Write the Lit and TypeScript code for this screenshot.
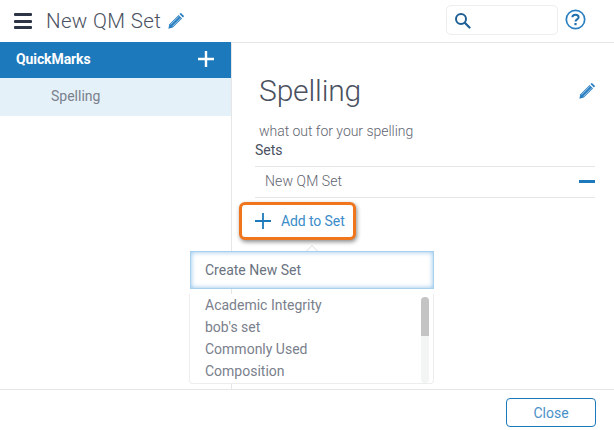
import { LitElement, html, css, svg } from "lit";
import { customElement } from "lit/decorators.js";

const pencil = (size: number) => html`<svg class="pencil" width=${size} height=${size} viewBox="0 0 16 16">
  ${svg`<path fill="#2a7fc1" d="M0.3 15.7 L1.4 11.2 L10.6 2 L14 5.4 L4.8 14.6 Z"/>
  <path fill="#2a7fc1" d="M11.5 1.1 L12.4 0.2 Q12.8 -0.1 13.2 0.2 L15.8 2.8 Q16.1 3.2 15.8 3.6 L14.9 4.5 Z"/>
  <path fill="none" stroke="#cfe3f3" stroke-width="0.7" d="M2.6 11.6 L10.8 3.4 M4.4 13.4 L12.6 5.2"/>`}
</svg>`;

@customElement("app-root")
export class AppRoot extends LitElement {
  static styles = css`
    :host {
      display: block;
      width: 614px;
      height: 430px;
      font-family: Roboto, "Liberation Sans", sans-serif;
      color: #5f6570;
      background: #fff;
      overflow: hidden;
    }
    .page { position: relative; display: flex; flex-direction: column; height: 430px; }
    .top {
      height: 42px; flex: none; display: flex; align-items: center;
      padding: 0 28px 0 14px;
    }
    .burger { width: 18px; height: 16px; display: flex; flex-direction: column; justify-content: space-between; margin-right: 14px; }
    .burger i { display: block; height: 3px; background: #2c3446; border-radius: 1px; }
    .title { font-size: 20.5px; font-weight: 300; color: #4a5160; letter-spacing: 0.35px; }
    .top .pencil { margin: 0 0 0 7px; }
    .search {
      margin-left: auto; width: 112px; height: 30px; box-sizing: border-box;
      border: 1px solid #eceded; border-radius: 5px; display: flex; align-items: center;
      padding-left: 7px; margin-top: -2px;
    }
    .help { margin-left: 7px; margin-top: -4px; display: block; }
    .main { flex: 1; display: flex; min-height: 0; border-top: 1px solid #e6e6e6; }
    .side { width: 231px; flex: none; border-right: 1px solid #e6e6e6; margin-top: -1px; }
    .side-head {
      height: 36px; background: #1c79bb; color: #fff; display: flex; align-items: center;
      justify-content: space-between; padding: 0 16px 2px; box-sizing: border-box; font-size: 14px; font-weight: 700; letter-spacing: -0.1px;
    }
    .side-item {
      height: 38px; background: #e5f1f9; display: flex; align-items: center; padding: 0 0 2px 51px; box-sizing: border-box;
      font-size: 14px; color: #7a808c;
    }
    .content { flex: 1; padding: 0 19px 0 23px; min-width: 0; position: relative; }
    .head-row { display: flex; align-items: center; justify-content: space-between; margin: 30px 0 0 4px; height: 36px; }
    h1 { margin: 0; font-size: 30px; font-weight: 300; color: #4a5160; letter-spacing: -0.15px; line-height: 36px; }
    .desc { margin: 14px 0 0 4px; font-size: 14px; line-height: 16px; color: #5f6570; font-weight: 300; letter-spacing: -0.03px; }
    .sets-label { font-size: 14px; line-height: 16px; margin-top: 3px; color: #4a5060; }
    .set-row {
      margin-top: 8px; height: 32px; box-sizing: border-box; border-top: 1px solid #e6e6e6; border-bottom: 1px solid #e6e6e6;
      display: flex; align-items: center; justify-content: space-between; padding: 0 0 2px 10px;
      font-size: 14px; font-weight: 300; color: #5f6570; letter-spacing: 0.1px;
    }
    .minus { width: 16px; height: 3px; background: #1c79bb; }
    .footer {
      height: 41px; box-sizing: border-box; flex: none; border-top: 1px solid #e6e6e6; display: flex; justify-content: flex-end;
      align-items: flex-start; padding: 8px 18px 0 0;
    }
    .close {
      width: 90px; height: 29px; box-sizing: border-box; border: 1.5px solid #1c79bb; border-radius: 4px;
      background: #fff; color: #4a90c8; font: 400 14px Roboto, sans-serif; padding: 0;
    }
    .callout {
      position: absolute; left: 239px; top: 202px; width: 117px; height: 38px; box-sizing: border-box;
      border: 3px solid #f0761e; border-radius: 6px; background: #fff;
      box-shadow: 1px 2px 4px rgba(0,0,0,.45); display: flex; align-items: center; padding-left: 13px;
      color: #3b8cc8; font-size: 14px; letter-spacing: -0.1px; gap: 10px;
    }
    .arrow {
      position: absolute; left: 307px; top: 247px; width: 9px; height: 9px; background: #fff;
      border-left: 1px solid #e6e6e6; border-top: 1px solid #e6e6e6; transform: rotate(45deg);
    }
    .pop { position: absolute; left: 190px; top: 251px; width: 244px; }
    .new {
      height: 38px; box-sizing: border-box; border: 1px solid #a9d0ec; background: #fff;
      box-shadow: inset 0 0 5px rgba(100,170,225,.75); display: flex; align-items: center; padding-left: 14px;
      font-size: 14px; color: #6b7280; letter-spacing: 0;
    }
    .list {
      height: 90px; margin-top: 5px; margin-left: -1px; box-sizing: border-box; border: 1px solid #ededed; border-top: none;
      border-radius: 0 0 4px 4px; background: #fff; padding: 0 0 0 15px; position: relative; overflow: hidden;
      font-size: 14px; color: #7a808c; letter-spacing: 0;
    }
    .list div.it { height: 22px; line-height: 22px; }
    .track { position: absolute; right: 4px; top: 3px; bottom: 0; width: 8px; background: #f3f5f5; border-radius: 4px; }
    .thumb { width: 8px; height: 39px; background: #c4c4c4; border-radius: 4px 4px 0 0; }
  `;

  render() {
    return html`<div class="page">
      <div class="top">
        <div class="burger"><i></i><i></i><i></i></div>
        <div class="title">New QM Set</div>
        ${pencil(16)}
        <div class="search">
          <svg width="17" height="17" viewBox="0 0 17 17">
            ${svg`<circle cx="7" cy="7" r="5" fill="none" stroke="#1f5f94" stroke-width="2"/>
            <path d="M10.8 10.8 L15.5 15.5" stroke="#1f5f94" stroke-width="2.2" stroke-linecap="round"/>`}
          </svg>
        </div>
        <svg class="help" width="21" height="21" viewBox="0 0 21 21">
          ${svg`<circle cx="10.5" cy="10.5" r="9.2" fill="none" stroke="#2a7fc1" stroke-width="1.7"/>
          <path d="M7.4 8.2 C7.4 4.8 13.6 4.8 13.6 8.2 C13.6 10.4 10.5 10.4 10.5 12.6" fill="none" stroke="#1f6fae" stroke-width="2"/>
          <rect x="9.4" y="14" width="2.2" height="2.2" fill="#1f6fae"/>`}
        </svg>
      </div>
      <div class="main">
        <div class="side">
          <div class="side-head">
            <span>QuickMarks</span>
            <svg width="18" height="18" viewBox="0 0 18 18">${svg`<path d="M9 1 V17 M1 9 H17" stroke="#fff" stroke-width="2.4"/>`}</svg>
          </div>
          <div class="side-item">Spelling</div>
        </div>
        <div class="content">
          <div class="head-row"><h1>Spelling</h1>${pencil(16)}</div>
          <div class="desc">what out for your spelling</div>
          <div class="sets-label">Sets</div>
          <div class="set-row"><span>New QM Set</span><span class="minus"></span></div>
        </div>
      </div>
      <div class="footer"><button class="close">Close</button></div>
      <div class="callout">
        <svg width="16" height="16" viewBox="0 0 16 16">${svg`<path d="M8 0 V16 M0 8 H16" stroke="#1c79bb" stroke-width="1.8"/>`}</svg>
        <span>Add to Set</span>
      </div>
      <div class="arrow"></div>
      <div class="pop">
        <div class="new">Create New Set</div>
        <div class="list">
          <div class="it">Academic Integrity</div>
          <div class="it">bob's set</div>
          <div class="it">Commonly Used</div>
          <div class="it">Composition</div>
          <div class="track"><div class="thumb"></div></div>
        </div>
      </div>
    </div>`;
  }
}
